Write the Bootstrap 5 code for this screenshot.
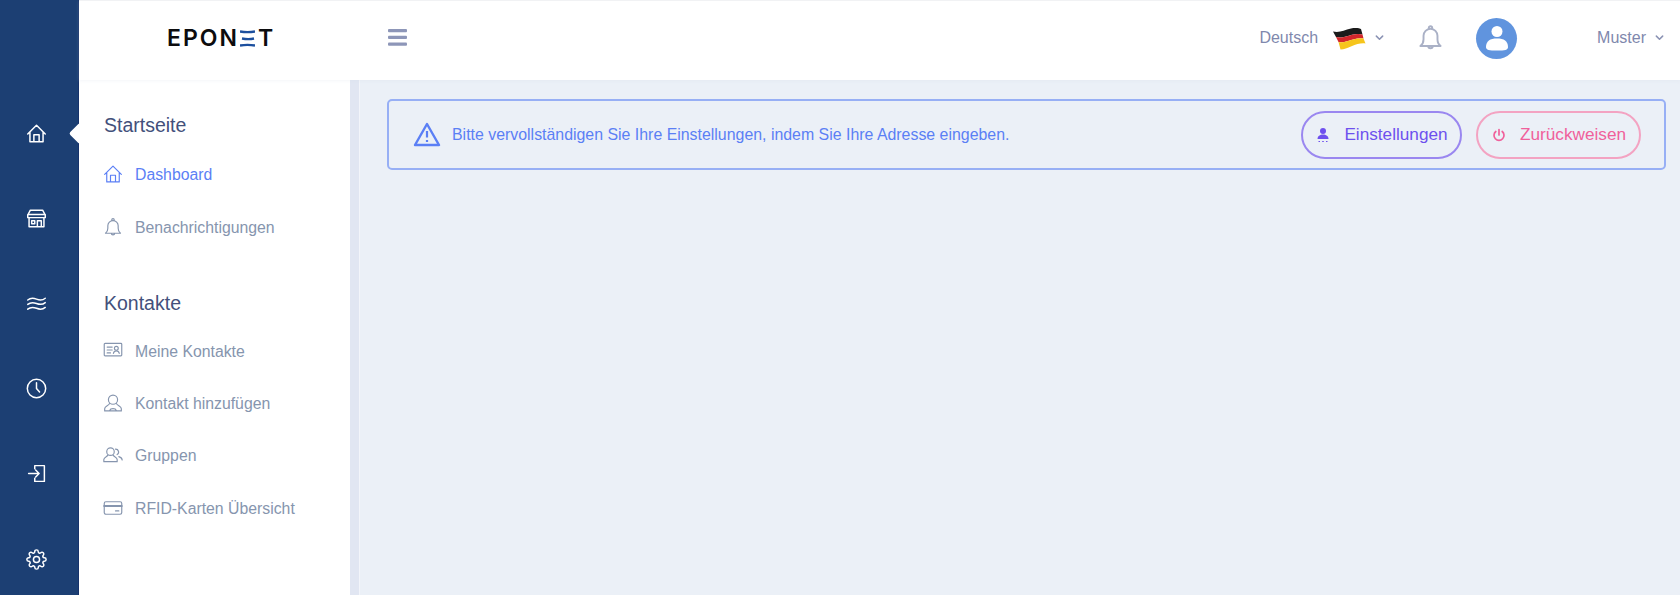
<!DOCTYPE html>
<html lang="de">
<head>
<meta charset="utf-8">
<title>Dashboard</title>
<link href="https://cdn.jsdelivr.net/npm/bootstrap@5.3.0/dist/css/bootstrap.min.css" rel="stylesheet">
<style>
html,body{height:595px;overflow:hidden}
body{font-family:"Liberation Sans",Arial,sans-serif;background:#fff;color:#3f4a75}
svg{display:block;flex:none}
.ico{fill:none;stroke:currentColor;stroke-width:1.7;stroke-linecap:round;stroke-linejoin:round}
.shell{height:595px}
.rail{width:79px;background:#1c3f73;border-right:1px solid #16326b;padding:91px 6px 0 0;color:#fff;position:relative;overflow:visible}
.rail-item{height:85.2px;flex:none;color:#fff}
.rail-item .ico{width:21px;height:21px;margin-top:-1px}
.notch{position:absolute;right:-9px;top:126px;width:15px;height:15px;background:#fff;transform:rotate(45deg);border-radius:2px}
.topbar{height:80px;background:#fff;border-top:1px solid #f1f2f4;padding:0 0 6px;box-shadow:0 1px 3px rgba(210,218,235,.25);z-index:2}
.brand-box{width:271px;padding-left:88px}
.logo{font-family:"Inter",sans-serif;font-weight:600;font-size:23px;letter-spacing:2px;color:#0c0c0e;line-height:1;margin-top:1px}
.logo svg{margin:0 3px 0 1px}
.burger{width:19px;height:17px;margin:0 0 0 38px;color:#8d96b8}
.lang{font-size:16px;color:#7f88ad}
.mini{width:9px;height:9px;color:#8b93b4}
.flag-wrap{margin:0 9px 0 14px}
.bell-top{width:27px;height:27px;color:#aab1c6;margin:0 0 0 33px}
.avatar{width:41px;height:41px;border-radius:50%;background:#6094de;margin:1px 80px 0 32px}
.muster-chev{margin-left:9px;margin-right:16px}
.side-panel{width:271px;background:#fff;padding:34px 0 0 25px}
.sect{font-size:19.500px;font-weight:400;color:#43507b;margin:0;line-height:22px}
.sect-b{margin-top:38px}
.sec-list{margin-top:15px}
.sec-list-b{margin-top:13.500px}
.sec-list .nav-link{height:52.400px;padding:0;color:#8695ae;font-size:15.800px;gap:12px}
.sec-list .nav-link .ico{width:20px;height:20px;stroke-width:1.4;margin:-2px 0 0 -1px}
.sec-list .nav-link.active-item{color:#5b7ff5}
.sec-gap{margin-top:-2px}
.strip{width:9px;background:#e1e6f2;border-right:1px solid #f3f5fa;box-sizing:content-box}
.content{background:#ebf0f7;padding:19px 14px 0 27px}
.notice{height:71px;background:transparent;border:2px solid #97aff5;border-radius:5px;color:#5b7ff5;font-size:15.900px;padding:0 23px 0 24px;margin:0}
.notice .warn{width:28px;height:26px;margin-right:11px;margin-top:-2px}
.pill{height:48px;border-radius:24px;background:transparent;font-size:17.200px;padding:0;display:flex;align-items:center;justify-content:center;gap:13px}
.pill-a{width:161px;border:2px solid #9a87f0;color:#6e50ee}
.pill-b{width:165px;border:2px solid #f3a3c2;color:#f0609b;margin-left:14px}
.pill svg{width:16px;height:16px}
</style>
</head>
<body>
<svg width="0" height="0" class="position-absolute">
<symbol id="i-home" viewBox="0 0 24 24"><path d="M2 12.500 12 2.500l10 10M4.500 10.500V21.500h15V10.500M9 21.500V13.500h6v8"/></symbol>
<symbol id="i-bell" viewBox="0 0 24 24"><path d="M3 19.500c1.800-1.300 2.800-3 2.800-6V10.500a6.200 6.200 0 0 1 12.400 0v3c0 3 1 4.700 2.800 6zM10.500 4.500V3.500a1.500 1.500 0 0 1 3 0v1M10 19.500a2 2 0 0 0 4 0"/></symbol>
<symbol id="i-card-id" viewBox="0 0 24 24"><rect x="1.500" y="4" width="21" height="15" rx="1"/><path d="M5 8.500h6M5 12h6M5 15.500h4"/><circle cx="16" cy="10" r="2.300"/><path d="M12.500 16c.4-2 1.700-3 3.500-3s3.100 1 3.500 3"/></symbol>
<symbol id="i-user" viewBox="0 0 24 24"><circle cx="12" cy="8" r="5.500"/><path d="M8 12.500c-1 3-6 3-6 6.500v2.500h20V19c0-3.500-5-3.500-6-6.500M8 21c1-3 7-3 8 0"/></symbol>
<symbol id="i-group" viewBox="0 0 24 24"><circle cx="9" cy="8" r="4.500"/><path d="M6 12c-.8 2-5 2.500-5 5.500V20h16v-2.500c0-3-4.200-3.500-5-5.500M15 5a3.500 3.500 0 0 1 2 6.500M19 14c2 .7 4 1.800 4 4"/></symbol>
<symbol id="i-cc" viewBox="0 0 24 24"><rect x="1.500" y="4.500" width="21" height="15" rx="2"/><path d="M1.500 9.500h21" stroke-width="2.500"/><path d="M15 15.500h4"/></symbol>
</svg>

<div class="shell d-flex">
  <nav class="rail d-flex flex-column align-items-center">
    <a href="#" class="rail-item d-flex align-items-center justify-content-center"><svg class="ico"><use href="#i-home"/></svg></a>
    <a href="#" class="rail-item d-flex align-items-center justify-content-center"><svg class="ico" viewBox="0 0 24 24"><path d="M5 2.500h14l3 5.500v3H2V8zM2 7.500h20M3.500 11V21.500h17V11M13 21.500V14.500h4.500v7M6.500 14.500h3.500v3.500H6.500z"/></svg></a>
    <a href="#" class="rail-item d-flex align-items-center justify-content-center"><svg class="ico" viewBox="0 0 24 24"><path d="M2 8c3-2.500 6-2.500 10-1s7 1.500 10-1M2 13c3-2.500 6-2.500 10-1s7 1.500 10-1M2 18.500c3-2.500 6-2.500 10-1s7 1.500 10-1"/></svg></a>
    <a href="#" class="rail-item d-flex align-items-center justify-content-center"><svg class="ico" viewBox="0 0 24 24"><circle cx="12" cy="12" r="10.500"/><path d="M12 5.500V12l3.500 4"/></svg></a>
    <a href="#" class="rail-item d-flex align-items-center justify-content-center"><svg class="ico" viewBox="0 0 24 24"><path d="M10 6.500V3h11v18H10v-3.500M3 12h12M11 8l4 4-4 4"/></svg></a>
    <a href="#" class="rail-item d-flex align-items-center justify-content-center"><svg class="ico" viewBox="0 0 24 24"><circle cx="12" cy="12" r="3.500"/><path d="M19.400 15a1.650 1.650 0 0 0 .33 1.820l.06.06a2 2 0 0 1 0 2.830 2 2 0 0 1-2.830 0l-.06-.06a1.650 1.650 0 0 0-1.820-.33 1.650 1.650 0 0 0-1 1.510V21a2 2 0 0 1-2 2 2 2 0 0 1-2-2v-.09A1.650 1.650 0 0 0 9 19.400a1.650 1.650 0 0 0-1.820.33l-.06.06a2 2 0 0 1-2.830 0 2 2 0 0 1 0-2.830l.06-.06a1.650 1.650 0 0 0 .33-1.820 1.650 1.650 0 0 0-1.510-1H3a2 2 0 0 1-2-2 2 2 0 0 1 2-2h.09A1.650 1.650 0 0 0 4.600 9a1.650 1.650 0 0 0-.33-1.820l-.06-.06a2 2 0 0 1 0-2.830 2 2 0 0 1 2.830 0l.06.06a1.650 1.650 0 0 0 1.820.33H9a1.650 1.650 0 0 0 1-1.510V3a2 2 0 0 1 2-2 2 2 0 0 1 2 2v.09a1.650 1.650 0 0 0 1 1.510 1.650 1.650 0 0 0 1.820-.33l.06-.06a2 2 0 0 1 2.830 0 2 2 0 0 1 0 2.830l-.06.06a1.650 1.650 0 0 0-.33 1.820V9a1.650 1.650 0 0 0 1.510 1H21a2 2 0 0 1 2 2 2 2 0 0 1-2 2h-.09a1.650 1.650 0 0 0-1.510 1z"/></svg></a>
    <span class="notch"></span>
  </nav>

  <div class="flex-grow-1 d-flex flex-column">
    <header class="navbar topbar flex-nowrap align-items-center justify-content-start">
      <div class="brand-box">
        <div class="logo d-flex align-items-center">EPON<svg width="15" height="17" viewBox="0 0 15 17"><g fill="none" stroke="#1c4f9e" stroke-width="2.400"><path d="M0 1.500q7.500 1.200 15 0"/><path d="M2 8.500q6.500 1.200 12 0"/><path d="M0 15.500q7.500-1.200 15 0"/></g></svg>T</div>
      </div>
      <svg class="burger" viewBox="0 0 19 17"><g fill="currentColor"><rect y="0" width="19" height="3.200" rx="1"/><rect y="6.800" width="19" height="3.200" rx="1"/><rect y="13.600" width="19" height="3.200" rx="1"/></g></svg>
      <div class="ms-auto d-flex align-items-center">
        <span class="lang">Deutsch</span>
        <svg class="flag-wrap" width="34" height="26" viewBox="0 0 34 26">
          <path d="M1 6.500C8 8 12 5 19 3.500c5-1 9 0 10 .5l1.500 5.500C25 8 19 10 14 11.500c-4 1.200-7 1-10 .5z" fill="#1b1b1b"/>
          <path d="M4 12c3 .5 6 .7 10-.5C19 10 25 8 30.500 9.500l1 4C26 12.500 21 14.500 16 16c-4 1.200-7 1.500-9.500 1z" fill="#d2262b"/>
          <path d="M6.500 17c2.500.5 5.500.2 9.500-1 5-1.500 10-3.500 15.500-2.500l2 5c-4-.8-9 .7-14 2.700-4 1.600-7.500 3-11 3.300z" fill="#f6c51c"/>
        </svg>
        <svg class="mini ico" viewBox="0 0 10 10"><path d="M1.500 3.500 5 7l3.500-3.500"/></svg>
        <svg class="ico bell-top"><use href="#i-bell"/></svg>
        <div class="avatar d-flex align-items-center justify-content-center">
          <svg width="26" height="30" viewBox="0 0 26 30"><circle cx="13" cy="8.500" r="5.500" fill="#fff"/><path d="M2 24c0-6 4-8.500 11-8.500S24 18 24 24c0 3-3 3.500-11 3.500S2 27 2 24z" fill="#fff"/></svg>
        </div>
        <span class="lang">Muster</span>
        <svg class="mini ico muster-chev" viewBox="0 0 10 10"><path d="M1.500 3.500 5 7l3.500-3.500"/></svg>
      </div>
    </header>

    <div class="flex-grow-1 d-flex">
      <aside class="side-panel">
        <h2 class="sect">Startseite</h2>
        <ul class="nav flex-column sec-list">
          <li class="nav-item"><a class="nav-link active-item d-flex align-items-center sec-gap" href="#"><svg class="ico"><use href="#i-home"/></svg>Dashboard</a></li>
          <li class="nav-item"><a class="nav-link d-flex align-items-center" href="#"><svg class="ico"><use href="#i-bell"/></svg>Benachrichtigungen</a></li>
        </ul>
        <h2 class="sect sect-b">Kontakte</h2>
        <ul class="nav flex-column sec-list sec-list-b">
          <li class="nav-item"><a class="nav-link d-flex align-items-center sec-gap" href="#"><svg class="ico"><use href="#i-card-id"/></svg>Meine Kontakte</a></li>
          <li class="nav-item"><a class="nav-link d-flex align-items-center" href="#"><svg class="ico"><use href="#i-user"/></svg>Kontakt hinzufügen</a></li>
          <li class="nav-item"><a class="nav-link d-flex align-items-center" href="#"><svg class="ico"><use href="#i-group"/></svg>Gruppen</a></li>
          <li class="nav-item"><a class="nav-link d-flex align-items-center" href="#"><svg class="ico"><use href="#i-cc"/></svg>RFID-Karten Übersicht</a></li>
        </ul>
      </aside>
      <div class="strip"></div>
      <main class="content flex-grow-1">
        <div class="alert notice d-flex align-items-center" role="alert">
          <svg class="warn" viewBox="0 0 28 26"><path d="M14 3 26 24H2z" fill="none" stroke="#5b7ff5" stroke-width="2.400" stroke-linejoin="round"/><path d="M14 10v6.500M14 19v2" stroke="#5b7ff5" stroke-width="2.200"/></svg>
          <span>Bitte vervollständigen Sie Ihre Einstellungen, indem Sie Ihre Adresse eingeben.</span>
          <div class="ms-auto d-flex">
            <button type="button" class="btn pill pill-a"><svg viewBox="0 0 16 16"><circle cx="8" cy="4" r="3" fill="currentColor"/><path d="M2.500 12c0-3 2.500-4.500 5.500-4.500s5.500 1.500 5.500 4.500z" fill="currentColor"/><path d="M3.500 14.500h1.500M7.200 14.500h1.600M11 14.500h1.500" stroke="currentColor" stroke-width="1.200"/></svg>Einstellungen</button>
            <button type="button" class="btn pill pill-b"><svg class="ico" viewBox="0 0 16 16"><path d="M8 2.500V8M4.800 4.500a5 5 0 1 0 6.400 0"/></svg>Zurückweisen</button>
          </div>
        </div>
      </main>
    </div>
  </div>
</div>
<script src="https://cdn.jsdelivr.net/npm/bootstrap@5.3.0/dist/js/bootstrap.bundle.min.js"></script>
</body>
</html>
